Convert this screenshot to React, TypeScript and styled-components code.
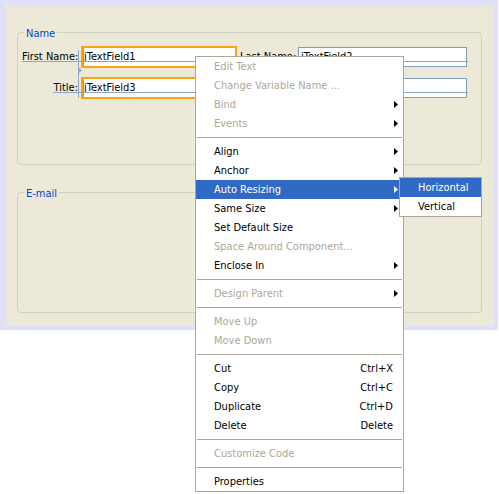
import React from "react";
import styled, { createGlobalStyle } from "styled-components";

const Global = createGlobalStyle`
  html, body { margin: 0; padding: 0; background: #ffffff; }
  body {
    font-family: "DejaVu Sans Condensed", "Liberation Sans", sans-serif;
    font-size: 11px;
    color: #000;
  }
`;

const Stage = styled.div`
  position: relative;
  width: 499px;
  height: 494px;
`;

const Frame = styled.div`
  width: 498px;
  box-sizing: border-box;
  padding: 5px 4px 4px 5px;
  background: #e0e0fa;
`;

const Panel = styled.div`
  height: 321px;
  box-sizing: border-box;
  background: #ece9d8;
  padding: 27px 12px 0 12px;
  display: flex;
  flex-direction: column;
  gap: 27px;
`;

const Group = styled.div<{ $h: number }>`
  position: relative;
  height: ${(p) => p.$h}px;
  box-sizing: border-box;
  border: 1px solid #d0d0bf;
  border-radius: 4px;
`;

const Legend = styled.span`
  position: absolute;
  left: 6px;
  top: -6px;
  padding: 0 2px;
  line-height: 13px;
  background: #ece9d8;
  color: #0046d5;
`;

const Form = styled.div`
  display: grid;
  grid-template-columns: 59px 156px 61px 169px;
  grid-template-rows: 20px 20px;
  row-gap: 11px;
  padding: 14px 0 0 4px;
`;

const Label = styled.div<{ $align: "left" | "right" }>`
  line-height: 20px;
  white-space: nowrap;
  text-align: ${(p) => p.$align};
  padding: ${(p) => (p.$align === "right" ? "0 3px 0 0" : "0 0 0 3px")};
`;

const Field = styled.div<{ $selected?: boolean }>`
  box-sizing: border-box;
  background: #fff;
  white-space: nowrap;
  overflow: hidden;
  align-self: center;
  height: ${(p) => (p.$selected ? 22 : 20)}px;
  margin: ${(p) => (p.$selected ? "-1px 0" : "0")};
  border: ${(p) => (p.$selected ? "2px solid #fca311" : "1px solid #7f9db9")};
  box-shadow: ${(p) => (p.$selected ? "inset 1px 0 0 #7f9db9" : "none")};
  padding: ${(p) => (p.$selected ? "0 1px" : "0 2px")};
  line-height: 18px;
`;

const Guide = styled.div<{ $x: number; $y: number; $w: number; $h: number }>`
  position: absolute;
  left: ${(p) => p.$x}px;
  top: ${(p) => p.$y}px;
  width: ${(p) => p.$w}px;
  height: ${(p) => p.$h}px;
  background: #8ca6c8;
`;

const Notch = styled.svg`
  position: absolute;
  left: 61px;
  top: 35px;
`;

const Menu = styled.div<{ $x: number; $y: number; $w: number }>`
  position: absolute;
  left: ${(p) => p.$x}px;
  top: ${(p) => p.$y}px;
  width: ${(p) => p.$w}px;
  box-sizing: border-box;
  background: #fff;
  border: 1px solid #aca899;
  display: flex;
  flex-direction: column;
`;

const Item = styled.div<{ $disabled?: boolean; $active?: boolean }>`
  height: 19px;
  display: flex;
  align-items: center;
  padding: 0 5px 0 18px;
  white-space: nowrap;
  color: ${(p) => (p.$active ? "#fff" : p.$disabled ? "#aca899" : "#000")};
  background: ${(p) => (p.$active ? "#316ac5" : "transparent")};
`;

const Shortcut = styled.span`
  margin-left: auto;
  margin-right: 5px;
`;

const Arrow = styled.svg`
  margin-left: auto;
`;

const Separator = styled.div`
  height: 1px;
  margin: 4px 1px;
  background: #aca899;
`;

type Entry =
  | { sep: true }
  | { sep?: false; label: string; disabled?: boolean; active?: boolean; sub?: boolean; key?: string };

const entries: Entry[] = [
  { label: "Edit Text", disabled: true },
  { label: "Change Variable Name ...", disabled: true },
  { label: "Bind", disabled: true, sub: true },
  { label: "Events", disabled: true, sub: true },
  { sep: true },
  { label: "Align", sub: true },
  { label: "Anchor", sub: true },
  { label: "Auto Resizing", sub: true, active: true },
  { label: "Same Size", sub: true },
  { label: "Set Default Size" },
  { label: "Space Around Component...", disabled: true },
  { label: "Enclose In", sub: true },
  { sep: true },
  { label: "Design Parent", disabled: true, sub: true },
  { sep: true },
  { label: "Move Up", disabled: true },
  { label: "Move Down", disabled: true },
  { sep: true },
  { label: "Cut", key: "Ctrl+X" },
  { label: "Copy", key: "Ctrl+C" },
  { label: "Duplicate", key: "Ctrl+D" },
  { label: "Delete", key: "Delete" },
  { sep: true },
  { label: "Customize Code", disabled: true },
  { sep: true },
  { label: "Properties" },
];

const SubArrow = ({ color }: { color: string }) => (
  <Arrow width="4" height="7" viewBox="0 0 4 7">
    <polygon points="0,0 4,3.5 0,7" fill={color} />
  </Arrow>
);

export default function App() {
  return (
    <Stage>
      <Global />
      <Frame>
        <Panel>
          <Group $h={133}>
            <Legend>Name</Legend>
            <Form>
              <Label $align="right">First Name:</Label>
              <Field $selected>jTextField1</Field>
              <Label $align="left">Last Name:</Label>
              <Field>jTextField2</Field>
              <Label $align="right">Title:</Label>
              <Field $selected>jTextField3</Field>
              <div />
              <Field />
            </Form>
            <Guide $x={4} $y={28} $w={215} $h={1} />
            <Guide $x={280} $y={28} $w={170} $h={1} />
            <Guide $x={35} $y={59} $w={184} $h={1} />
            <Guide $x={280} $y={59} $w={170} $h={1} />
            <Guide $x={60} $y={17} $w={1} $h={48} />
            <Notch width="3" height="5" viewBox="0 0 3 5">
              <polygon points="0,0 3,2.5 0,5" fill="#8ca6c8" />
            </Notch>
          </Group>
          <Group $h={121}>
            <Legend>E-mail</Legend>
          </Group>
        </Panel>
      </Frame>

      <Menu $x={195} $y={56} $w={209}>
        {entries.map((e, i) =>
          e.sep ? (
            <Separator key={i} />
          ) : (
            <Item key={i} $disabled={e.disabled} $active={e.active}>
              {e.label}
              {e.key && <Shortcut>{e.key}</Shortcut>}
              {e.sub && <SubArrow color={e.active ? "#fff" : "#000"} />}
            </Item>
          )
        )}
      </Menu>

      <Menu $x={399} $y={177} $w={83}>
        <Item $active>Horizontal</Item>
        <Item>Vertical</Item>
      </Menu>
    </Stage>
  );
}
